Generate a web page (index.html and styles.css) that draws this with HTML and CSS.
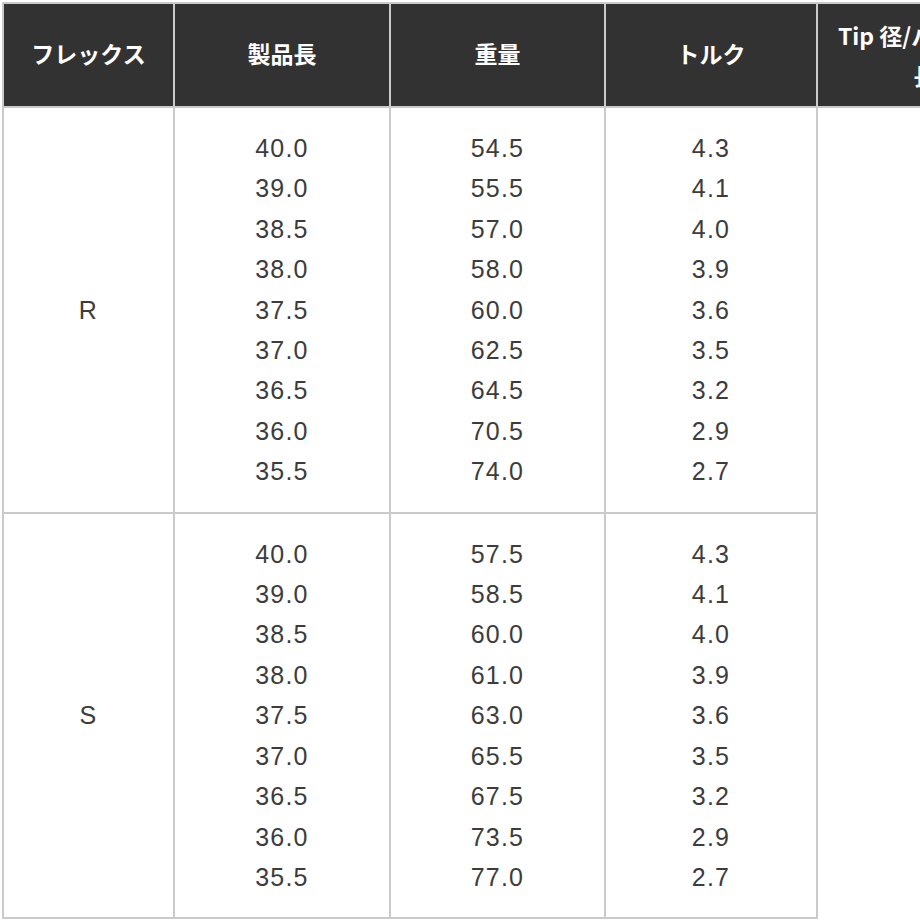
FILE: index.html
```html
<!DOCTYPE html>
<html lang="ja">
<head>
<meta charset="utf-8">
<title>スペック表</title>
<link rel="stylesheet" href="styles.css">
</head>
<body>
<table class="spec">
  <colgroup>
    <col class="c1"><col class="c2"><col class="c3"><col class="c4"><col class="c5">
  </colgroup>
  <thead>
    <tr>
      <th>フレックス</th>
      <th>製品長</th>
      <th>重量</th>
      <th>トルク</th>
      <th class="last">Tip 径/バット径/<br>長</th>
    </tr>
  </thead>
  <tbody>
    <tr>
      <td class="flex">R</td>
      <td><span>40.0</span><span>39.0</span><span>38.5</span><span>38.0</span><span>37.5</span><span>37.0</span><span>36.5</span><span>36.0</span><span>35.5</span></td>
      <td><span>54.5</span><span>55.5</span><span>57.0</span><span>58.0</span><span>60.0</span><span>62.5</span><span>64.5</span><span>70.5</span><span>74.0</span></td>
      <td><span>4.3</span><span>4.1</span><span>4.0</span><span>3.9</span><span>3.6</span><span>3.5</span><span>3.2</span><span>2.9</span><span>2.7</span></td>
      <td class="empty" rowspan="2"></td>
    </tr>
    <tr>
      <td class="flex">S</td>
      <td><span>40.0</span><span>39.0</span><span>38.5</span><span>38.0</span><span>37.5</span><span>37.0</span><span>36.5</span><span>36.0</span><span>35.5</span></td>
      <td><span>57.5</span><span>58.5</span><span>60.0</span><span>61.0</span><span>63.0</span><span>65.5</span><span>67.5</span><span>73.5</span><span>77.0</span></td>
      <td><span>4.3</span><span>4.1</span><span>4.0</span><span>3.9</span><span>3.6</span><span>3.5</span><span>3.2</span><span>2.9</span><span>2.7</span></td>
    </tr>
  </tbody>
</table>
</body>
</html>
```
FILE: styles.css
```css
html, body {
  margin: 0;
  padding: 0;
  overflow: hidden;
  background: #ffffff;
}

.spec {
  margin: 2px 0 0 2px;
  border-collapse: collapse;
  table-layout: fixed;
  width: 1030px;
  font-family: "Liberation Sans", "Noto Sans CJK JP", sans-serif;
}

.c1 { width: 171px; }
.c2 { width: 216px; }
.c3 { width: 215px; }
.c4 { width: 212px; }
.c5 { width: 216px; }

.spec th {
  height: 98px;
  padding: 0 0 4px;
  background: #323232;
  color: #ffffff;
  font-family: "Noto Sans CJK JP", "Liberation Sans", sans-serif;
  font-weight: bold;
  font-size: 23px;
  line-height: 40px;
  text-align: center;
  vertical-align: middle;
  border: 2px solid #cacaca;
  white-space: nowrap;
}

.spec th.last {
  padding: 2px 0;
}

.spec td {
  padding: 20px 0;
  border: 2px solid #cacaca;
  text-align: center;
  vertical-align: middle;
  color: #3c3c3c;
  font-size: 25px;
  letter-spacing: 1.2px;
  line-height: 40.4px;
}

.spec td span {
  display: block;
}

.spec td.empty {
  border: none;
  border-left: 2px solid #cacaca;
}
```
